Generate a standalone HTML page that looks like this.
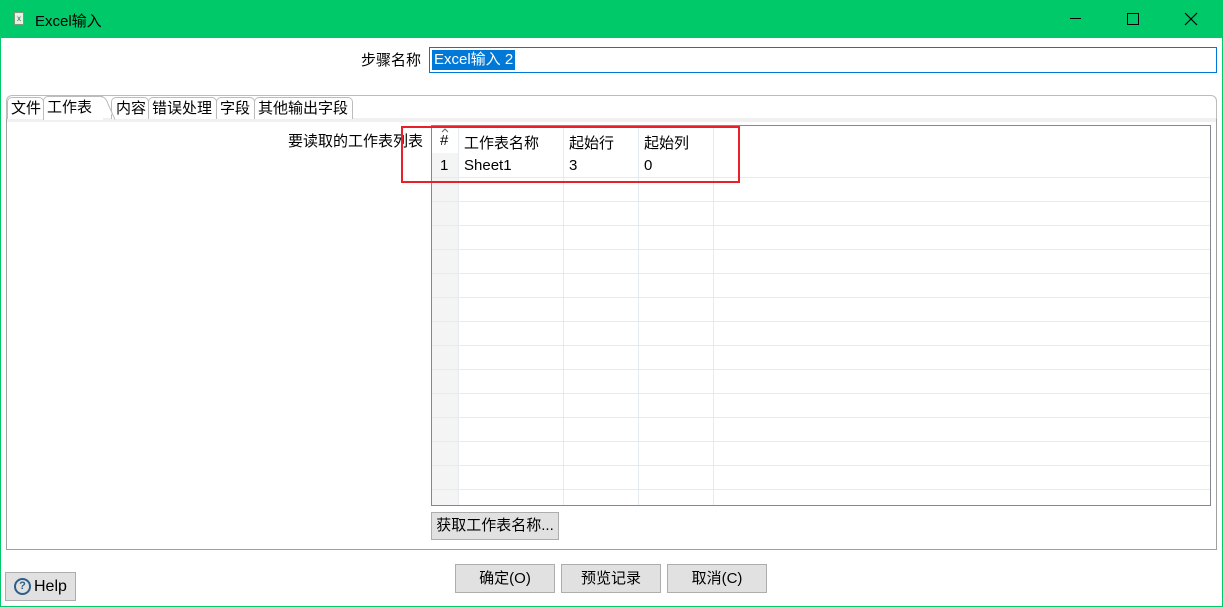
<!DOCTYPE html>
<html><head><meta charset="utf-8"><style>
*{margin:0;padding:0;box-sizing:border-box}
body{width:1223px;height:607px;position:relative;background:#fff;font-family:"Liberation Sans","Noto Sans CJK SC",sans-serif;font-size:15px;color:#000;overflow:hidden}
.a{position:absolute}
.btn{position:absolute;background:#e1e1e1;border:1px solid #adadad;text-align:center;font-size:15px}
.tab{position:absolute;top:97px;height:22px;border:1px solid #bcbcbc;border-bottom:none;border-radius:5px 5px 0 0;background:#fff;line-height:21px;padding-left:3px;font-size:15px}
</style></head><body>
<div class="a" style="left:0;top:0;width:1223px;height:607px;border:1px solid #00c96a"></div>
<div class="a" style="left:0;top:0;width:1223px;height:38px;background:#00c96a"></div>
<div class="a" style="left:14px;top:12px;width:10px;height:13px;background:#e8efe8;border:1px solid #7a9a7a;font-size:8px;line-height:11px;text-align:center;color:#2a6a2a">x</div>
<div class="a" style="left:35px;top:10px;font-size:15px">Excel输入</div>
<div class="a" style="left:1070px;top:18px;width:11px;height:1px;background:#000"></div>
<div class="a" style="left:1127px;top:13px;width:12px;height:12px;border:1px solid #000"></div>
<svg class="a" style="left:1184px;top:12px" width="14" height="14"><path d="M1 1L13 13M13 1L1 13" stroke="#000" stroke-width="1.2"/></svg>

<div class="a" style="left:361px;top:49px">步骤名称</div>
<div class="a" style="left:429px;top:47px;width:788px;height:26px;border:1px solid #0078d7"></div>
<div class="a" style="left:432px;top:50px;height:20px;padding:0 2px;background:#0078d7;color:#fff;line-height:20px;font-size:15px">Excel输入 2</div>

<div class="a" style="left:6px;top:118px;width:1211px;height:432px;border:1px solid #a0a0a0;border-top:none;background:#fff"></div>
<div class="a" style="left:6px;top:95px;width:1211px;height:24px;border:1px solid #bcbcbc;border-bottom:none;border-radius:6px 6px 0 0;background:#fff"></div>
<div class="a" style="left:7px;top:118px;width:1209px;height:4px;background:#f0f0f0"></div>
<div class="tab" style="left:7px;width:37px">文件</div>
<div class="tab" style="left:254px;width:99px">其他输出字段</div>
<div class="tab" style="left:216px;width:39px">字段</div>
<div class="tab" style="left:148px;width:69px">错误处理</div>
<div class="tab" style="left:111px;width:38px;padding-left:4px">内容</div>
<div class="tab" style="left:43px;top:96px;height:24px;width:60px;border-right:none;border-radius:5px 0 0 0">工作表</div>
<svg class="a" style="left:100px;top:96px" width="16" height="24"><path d="M0 0.5Q6 0.5 8 8L15 23.5" stroke="#bcbcbc" fill="#fff"/></svg>

<div class="a" style="left:288px;top:130px">要读取的工作表列表</div>

<div class="a" style="left:431px;top:125px;width:780px;height:381px;border:1px solid #828790;background:#fff;overflow:hidden">
<div class="a" style="left:0;top:27px;width:26px;height:360px;background:#f4f4f4"></div>
<svg class="a" style="left:0;top:0" width="780" height="381">
<g stroke="#e6ebf2" stroke-width="1">
<line x1="26.5" y1="0" x2="26.5" y2="381"/><line x1="131.5" y1="0" x2="131.5" y2="381"/><line x1="206.5" y1="0" x2="206.5" y2="381"/><line x1="281.5" y1="0" x2="281.5" y2="381"/>
<line x1="0" y1="51.5" x2="780" y2="51.5"/><line x1="0" y1="75.5" x2="780" y2="75.5"/><line x1="0" y1="99.5" x2="780" y2="99.5"/><line x1="0" y1="123.5" x2="780" y2="123.5"/><line x1="0" y1="147.5" x2="780" y2="147.5"/><line x1="0" y1="171.5" x2="780" y2="171.5"/><line x1="0" y1="195.5" x2="780" y2="195.5"/><line x1="0" y1="219.5" x2="780" y2="219.5"/><line x1="0" y1="243.5" x2="780" y2="243.5"/><line x1="0" y1="267.5" x2="780" y2="267.5"/><line x1="0" y1="291.5" x2="780" y2="291.5"/><line x1="0" y1="315.5" x2="780" y2="315.5"/><line x1="0" y1="339.5" x2="780" y2="339.5"/><line x1="0" y1="363.5" x2="780" y2="363.5"/>
</g>
<path d="M10 6L13 3L16 6" stroke="#666" fill="none"/>
</svg>
<div class="a" style="left:8px;top:6px">#</div>
<div class="a" style="left:32px;top:6px">工作表名称</div>
<div class="a" style="left:137px;top:6px">起始行</div>
<div class="a" style="left:212px;top:6px">起始列</div>
<div class="a" style="left:8px;top:31px">1</div>
<div class="a" style="left:32px;top:31px">Sheet1</div>
<div class="a" style="left:137px;top:31px">3</div>
<div class="a" style="left:212px;top:31px">0</div>
</div>
<div class="a" style="left:401px;top:126px;width:339px;height:57px;border:2px solid #e8202a"></div>

<div class="btn" style="left:431px;top:512px;width:128px;height:28px;line-height:26px">获取工作表名称...</div>
<div class="btn" style="left:5px;top:572px;width:71px;height:29px;line-height:27px;text-align:left;padding-left:28px;font-size:16px">Help</div>
<div class="a" style="left:14px;top:578px;width:17px;height:17px;border-radius:50%;border:2px solid #2d5f8a;font-size:11px;line-height:13px;text-align:center;font-weight:bold;color:#2d5f8a">?</div>
<div class="btn" style="left:455px;top:564px;width:100px;height:29px;line-height:27px">确定(O)</div>
<div class="btn" style="left:561px;top:564px;width:100px;height:29px;line-height:27px">预览记录</div>
<div class="btn" style="left:667px;top:564px;width:100px;height:29px;line-height:27px">取消(C)</div>
</body></html>
